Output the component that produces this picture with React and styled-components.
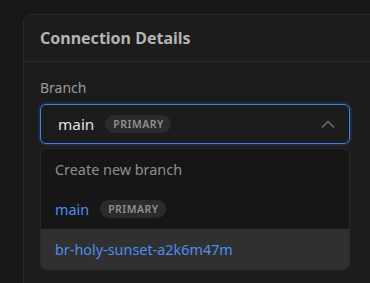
import React from "react";
import styled, { createGlobalStyle } from "styled-components";

const Global = createGlobalStyle`
  html, body { margin: 0; padding: 0; background: #171717; }
  body { font-family: "Noto Sans", "Open Sans", sans-serif; -webkit-font-smoothing: antialiased; }
`;

const Page = styled.div`
  padding: 14px 0 0 23px;
  height: 283px;
  box-sizing: border-box;
  overflow: hidden;
`;

const Card = styled.section`
  width: 400px;
  height: 320px;
  background: #1c1c1c;
  border: 1px solid #2a2a2a;
  border-radius: 8px;
  box-sizing: border-box;
`;

const CardHeader = styled.header`
  height: 47px;
  box-sizing: border-box;
  border-bottom: 1px solid #2c2c2c;
  padding: 0 16px;
  display: flex;
  align-items: center;
  font-size: 16px;
  font-weight: 700;
  color: #b4b4b4;
`;

const CardBody = styled.div`
  padding: 16px 0 0 16px;
  width: 310px;
`;

const Label = styled.div`
  font-size: 14px;
  color: #9a9a9a;
  line-height: 20px;
  margin-bottom: 6px;
`;

const Trigger = styled.div`
  height: 40px;
  box-sizing: border-box;
  border: 1px solid #3f7fe6;
  box-shadow: 0 0 0 2px #1f2a3a;
  border-radius: 6px;
  display: flex;
  align-items: center;
  padding: 0 14px 0 17px;
  gap: 11px;
`;

const Value = styled.span`
  font-size: 15.3px;
  color: #e2e2e2;
`;

const Badge = styled.span`
  font-size: 10.5px;
  font-weight: 600;
  letter-spacing: 0.5px;
  color: #909090;
  background: #2b2b2b;
  border-radius: 10px;
  height: 18px;
  padding: 0 7px 0 8px;
  display: inline-flex;
  align-items: center;
`;

const Chevron = styled.svg`
  margin-left: auto;
`;

const Menu = styled.div`
  margin-top: 4px;
  border: 1px solid #2a2a2a;
  background: #161616;
  border-radius: 6px;
  overflow: hidden;
  box-sizing: border-box;
`;

const Item = styled.div`
  height: 40px;
  display: flex;
  align-items: center;
  gap: 11px;
  padding: 0 14px;
  background: ${(p) => (p.$active ? "#303030" : "transparent")};
`;

const ItemText = styled.span`
  font-size: 14.4px;
  color: ${(p) => (p.$blue ? "#4d8df0" : "#8e8e8e")};
`;

export default function App() {
  return (
    <>
      <Global />
      <Page>
        <Card>
          <CardHeader>Connection Details</CardHeader>
          <CardBody>
            <Label>Branch</Label>
            <Trigger>
              <Value>main</Value>
              <Badge>PRIMARY</Badge>
              <Chevron width="14" height="8" viewBox="0 0 14 8" fill="none">
                <path d="M1.5 7L7 1.5L12.5 7" stroke="#5c5c5c" strokeWidth="1.8" strokeLinecap="round" strokeLinejoin="round" />
              </Chevron>
            </Trigger>
            <Menu>
              <Item><ItemText>Create new branch</ItemText></Item>
              <Item><ItemText $blue>main</ItemText><Badge>PRIMARY</Badge></Item>
              <Item $active><ItemText $blue>br-holy-sunset-a2k6m47m</ItemText></Item>
            </Menu>
          </CardBody>
        </Card>
      </Page>
    </>
  );
}
